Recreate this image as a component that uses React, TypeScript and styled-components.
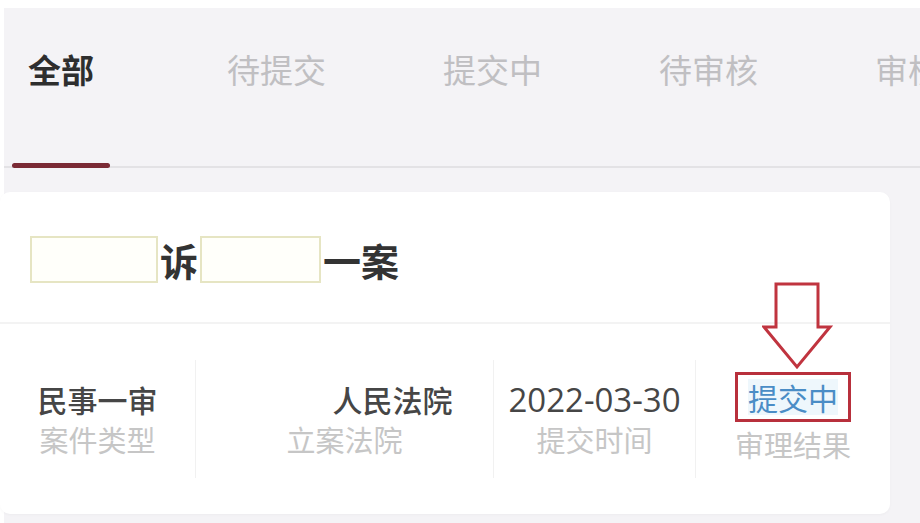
import styled, { createGlobalStyle } from "styled-components";

const GlobalStyle = createGlobalStyle`
  body {
    margin: 0;
    background: #ffffff;
    font-family: "Noto Sans CJK SC", "Noto Sans", sans-serif;
  }
`

const tabs = ["全部", "待提交", "提交中", "待审核", "审核完成"]

interface StatItem {
  value: string;
  label: string;
  redacted?: number;
  status?: boolean;
}

const stats: StatItem[] = [
  { value: "民事一审", label: "案件类型" },
  { value: "人民法院", label: "立案法院", redacted: 96 },
  { value: "2022-03-30", label: "提交时间" },
  { value: "提交中", label: "审理结果", status: true },
]

function DownArrow() {
  return (
    <ArrowSvg width="72" height="90" viewBox="0 0 72 90">
      <polygon
        points="14,2 56,2 56,45 68,45 35,85 2,45 14,45"
        fill="none"
        stroke="#c0343f"
        strokeWidth="3"
        strokeLinejoin="miter"
      />
    </ArrowSvg>
  )
}

function App() {
  return (
    <Page>
      <GlobalStyle />
      <TabBar>
        {tabs.map((t, i) => (
          <Tab key={t} $active={i === 0}>{t}</Tab>
        ))}
      </TabBar>
      <Card>
        <TitleRow>
          <Blank $w={128} />
          <span>诉</span>
          <Blank $w={121} />
          <span>一案</span>
        </TitleRow>
        <StatsRow>
          {stats.map((s, i) => (
            <Stat key={s.label} $first={i === 0}>
              {s.status ? (
                <StatusBox>
                  <DownArrow />
                  <StatusText>{s.value}</StatusText>
                </StatusBox>
              ) : (
                <Value $latin={/^\d/.test(s.value)}>
                  {s.redacted ? <Redacted $w={s.redacted} /> : null}
                  {s.value}
                </Value>
              )}
              <Label>{s.label}</Label>
            </Stat>
          ))}
        </StatsRow>
      </Card>
    </Page>
  )
}

export default App

const Page = styled.div`
  margin: 8px 0 0 4px;
  background: #f4f3f6;
  padding-bottom: 9px;
`

const TabBar = styled.div`
  display: flex;
  align-items: stretch;
  gap: 117px;
  height: 158px;
  padding-left: 8px;
  border-bottom: 2px solid #e3e2e5;
  overflow-x: clip;
  overflow-y: visible;
`

const Tab = styled.div<{ $active?: boolean }>`
  position: relative;
  flex: 0 0 auto;
  min-width: 98px;
  padding-top: 37px;
  text-align: center;
  white-space: nowrap;
  font-size: 33px;
  line-height: 48px;
  font-weight: ${p => (p.$active ? 700 : 400)};
  color: ${p => (p.$active ? "#2e2e2e" : "#c0bfc2")};

  &::after {
    content: "";
    display: ${p => (p.$active ? "block" : "none")};
    position: absolute;
    left: 0;
    right: 0;
    bottom: -2px;
    height: 5px;
    border-radius: 3px;
    background: #7a2a35;
  }
`

const Card = styled.div`
  margin: 24px 30px 0 -4px;
  height: 322px;
  background: #ffffff;
  border-radius: 10px;
  box-shadow: 0 1px 3px rgba(0, 0, 0, 0.03);
  display: flex;
  flex-direction: column;
`

const TitleRow = styled.div`
  height: 132px;
  display: flex;
  align-items: center;
  padding-left: 30px;
  padding-top: 4px;
  box-sizing: border-box;
  border-bottom: 2px solid #f3f3f3;
  font-size: 38px;
  font-weight: 700;
  color: #333333;
  gap: 2px;
`

const Blank = styled.span<{ $w: number }>`
  display: inline-block;
  width: ${p => p.$w}px;
  height: 47px;
  box-sizing: border-box;
  border: 2px solid #e6e5c3;
  background: #fffffa;
`

const StatsRow = styled.div`
  flex: 1;
  display: grid;
  grid-template-columns: 195px 298px 202px 1fr;
  align-items: center;
`

const Stat = styled.div<{ $first?: boolean }>`
  height: 118px;
  display: flex;
  flex-direction: column;
  align-items: center;
  justify-content: center;
  border-left: ${p => (p.$first ? "none" : "1px solid #f1f1f1")};
`

const Value = styled.div<{ $latin?: boolean }>`
  display: flex;
  align-items: center;
  height: 40px;
  font-size: ${p => (p.$latin ? "33px" : "30px")};
  font-family: ${p => (p.$latin ? '"Open Sans", "Noto Sans CJK SC", sans-serif' : '"Noto Sans CJK SC", sans-serif')};
  font-weight: 500;
  color: #464646;
  white-space: nowrap;
`

const Redacted = styled.span<{ $w: number }>`
  display: inline-block;
  width: ${p => p.$w}px;
`

const Label = styled.div`
  height: 40px;
  line-height: 40px;
  font-size: 29px;
  color: #c6c6c6;
  white-space: nowrap;
`

const StatusBox = styled.div`
  position: relative;
  height: 40px;
  display: flex;
  align-items: center;
  margin-top: -2px;
  margin-bottom: 2px;
  padding: 2px 10px;
  border: 3px solid #b8303c;
`

const StatusText = styled.span`
  font-size: 30px;
  line-height: 36px;
  color: #4a8dc6;
  background: #eef7fc;
`

const ArrowSvg = styled.svg`
  position: absolute;
  left: 24px;
  top: -93px;
`
